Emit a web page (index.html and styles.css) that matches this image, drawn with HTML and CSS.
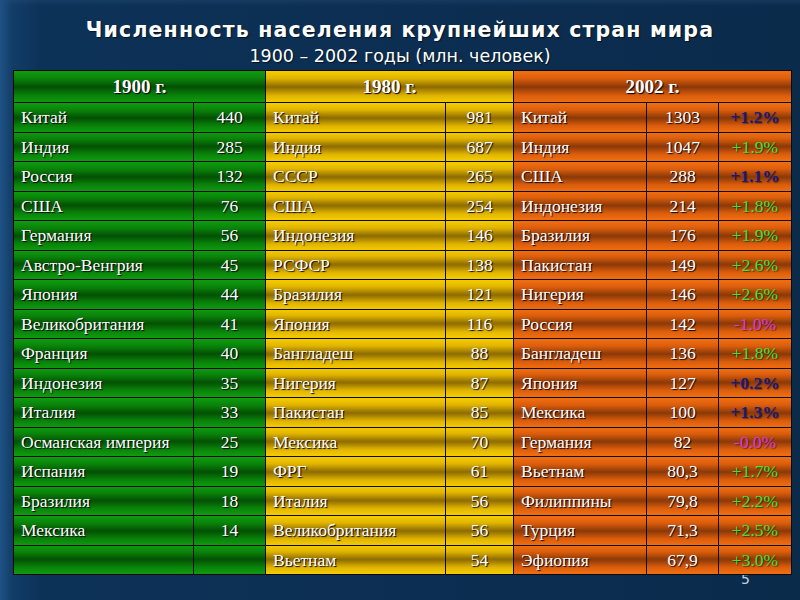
FILE: index.html
```html
<!DOCTYPE html>
<html lang="ru">
<head>
<meta charset="utf-8">
<title>Численность населения</title>
<link rel="stylesheet" href="styles.css">
</head>
<body>
<div class="slide">
  <h1 class="title">Численность населения крупнейших стран мира</h1>
  <p class="subtitle">1900 – 2002 годы (млн. человек)</p>
  <table class="pop">
    <colgroup>
      <col class="c1"><col class="c2"><col class="c3"><col class="c4"><col class="c5"><col class="c6"><col class="c7">
    </colgroup>
    <thead>
      <tr>
        <th colspan="2" class="g">1900 г.</th>
        <th colspan="2" class="y">1980 г.</th>
        <th colspan="3" class="o">2002 г.</th>
      </tr>
    </thead>
    <tbody>
      <tr><td class="g n">Китай</td><td class="g v">440</td><td class="y n">Китай</td><td class="y v">981</td><td class="o n">Китай</td><td class="o v">1303</td><td class="o p blue">+1.2%</td></tr>
      <tr><td class="g n">Индия</td><td class="g v">285</td><td class="y n">Индия</td><td class="y v">687</td><td class="o n">Индия</td><td class="o v">1047</td><td class="o p green">+1.9%</td></tr>
      <tr><td class="g n">Россия</td><td class="g v">132</td><td class="y n">СССР</td><td class="y v">265</td><td class="o n">США</td><td class="o v">288</td><td class="o p blue">+1.1%</td></tr>
      <tr><td class="g n">США</td><td class="g v">76</td><td class="y n">США</td><td class="y v">254</td><td class="o n">Индонезия</td><td class="o v">214</td><td class="o p green">+1.8%</td></tr>
      <tr><td class="g n">Германия</td><td class="g v">56</td><td class="y n">Индонезия</td><td class="y v">146</td><td class="o n">Бразилия</td><td class="o v">176</td><td class="o p green">+1.9%</td></tr>
      <tr><td class="g n">Австро-Венгрия</td><td class="g v">45</td><td class="y n">РСФСР</td><td class="y v">138</td><td class="o n">Пакистан</td><td class="o v">149</td><td class="o p green">+2.6%</td></tr>
      <tr><td class="g n">Япония</td><td class="g v">44</td><td class="y n">Бразилия</td><td class="y v">121</td><td class="o n">Нигерия</td><td class="o v">146</td><td class="o p green">+2.6%</td></tr>
      <tr><td class="g n">Великобритания</td><td class="g v">41</td><td class="y n">Япония</td><td class="y v">116</td><td class="o n">Россия</td><td class="o v">142</td><td class="o p magenta">-1.0%</td></tr>
      <tr><td class="g n">Франция</td><td class="g v">40</td><td class="y n">Бангладеш</td><td class="y v">88</td><td class="o n">Бангладеш</td><td class="o v">136</td><td class="o p green">+1.8%</td></tr>
      <tr><td class="g n">Индонезия</td><td class="g v">35</td><td class="y n">Нигерия</td><td class="y v">87</td><td class="o n">Япония</td><td class="o v">127</td><td class="o p blue">+0.2%</td></tr>
      <tr><td class="g n">Италия</td><td class="g v">33</td><td class="y n">Пакистан</td><td class="y v">85</td><td class="o n">Мексика</td><td class="o v">100</td><td class="o p blue">+1.3%</td></tr>
      <tr><td class="g n">Османская империя</td><td class="g v">25</td><td class="y n">Мексика</td><td class="y v">70</td><td class="o n">Германия</td><td class="o v">82</td><td class="o p magenta">-0.0%</td></tr>
      <tr><td class="g n">Испания</td><td class="g v">19</td><td class="y n">ФРГ</td><td class="y v">61</td><td class="o n">Вьетнам</td><td class="o v">80,3</td><td class="o p green">+1.7%</td></tr>
      <tr><td class="g n">Бразилия</td><td class="g v">18</td><td class="y n">Италия</td><td class="y v">56</td><td class="o n">Филиппины</td><td class="o v">79,8</td><td class="o p green">+2.2%</td></tr>
      <tr><td class="g n">Мексика</td><td class="g v">14</td><td class="y n">Великобритания</td><td class="y v">56</td><td class="o n">Турция</td><td class="o v">71,3</td><td class="o p green">+2.5%</td></tr>
      <tr><td class="g n"></td><td class="g v"></td><td class="y n">Вьетнам</td><td class="y v">54</td><td class="o n">Эфиопия</td><td class="o v">67,9</td><td class="o p green">+3.0%</td></tr>
    </tbody>
  </table>
  <div class="pageno">5</div>
</div>
</body>
</html>
```

FILE: styles.css
```css
html, body {
  margin: 0;
  padding: 0;
}
body {
  width: 800px;
  height: 600px;
  overflow: hidden;
  background: #0c2e50;
}
.slide {
  position: relative;
  width: 800px;
  height: 600px;
  box-sizing: border-box;
  padding-top: 18px;
  background:
    linear-gradient(to bottom, rgba(40,80,120,0.35) 0px, rgba(40,80,120,0) 6px),
    linear-gradient(to right, #1f5286 0px, #123d68 12px, #0d3258 40px, #0c2e52 400px, #0b2b4b 800px);
}
.title {
  margin: 0;
  font-family: "DejaVu Sans", Verdana, sans-serif;
  font-weight: bold;
  font-size: 20.5px;
  line-height: 24px;
  letter-spacing: 1.15px;
  text-align: center;
  color: #ffffff;
  text-shadow: 1px 1px 1px rgba(0,0,0,0.6);
}
.subtitle {
  margin: 3px 0 0 0;
  font-family: "DejaVu Sans", Verdana, sans-serif;
  font-size: 17.5px;
  line-height: 22px;
  text-align: center;
  color: #ffffff;
  text-shadow: 1px 1px 1px rgba(0,0,0,0.6);
}
.pop {
  position: relative;
  z-index: 2;
  margin: 3px 0 0 13px;
  width: 778px;
  table-layout: fixed;
  border-collapse: collapse;
  font-family: "Liberation Serif", "Times New Roman", serif;
  color: #ffffff;
}
.c1 { width: 180px; }
.c2 { width: 72px; }
.c3 { width: 180px; }
.c4 { width: 68px; }
.c5 { width: 133px; }
.c6 { width: 72px; }
.c7 { width: 73px; }
.pop th, .pop td {
  border: 1px solid #0a0a0a;
  padding: 0;
  white-space: nowrap;
  line-height: 20px;
  text-shadow: 1px 1px 1px #000000;
}
.pop th {
  height: 31px;
  font-size: 19px;
  font-weight: bold;
  text-align: center;
}
.pop td {
  height: 28.5px;
  font-size: 17.5px;
}
.pop td.n {
  text-align: left;
  padding-left: 7px;
}
.pop td.v, .pop td.p {
  text-align: center;
}
.g {
  background: linear-gradient(to bottom, #109a10 0%, #0a840a 22%, #035003 50%, #0a840a 78%, #109a10 100%);
}
.y {
  background: linear-gradient(to bottom, #f4cc00 0%, #e0b400 22%, #8c6a00 50%, #e0b400 78%, #f4cc00 100%);
}
.o {
  background: linear-gradient(to bottom, #f06e12 0%, #dc5e0c 22%, #8a3808 50%, #dc5e0c 78%, #f06e12 100%);
}
.pop td.blue {
  color: #1c1a78;
  font-weight: bold;
  text-shadow: 1px 1px 1px rgba(0,0,0,0.35);
}
.pop td.green {
  color: #3ae23a;
  text-shadow: 1px 1px 1px rgba(0,0,0,0.5);
}
.pop td.magenta {
  color: #e038e0;
  text-shadow: 1px 1px 1px rgba(0,0,0,0.5);
}
.pageno {
  position: absolute;
  z-index: 1;
  left: 741px;
  top: 571px;
  font-family: "DejaVu Sans", Verdana, sans-serif;
  font-size: 14px;
  line-height: 16px;
  color: #c8d0dc;
}
```
